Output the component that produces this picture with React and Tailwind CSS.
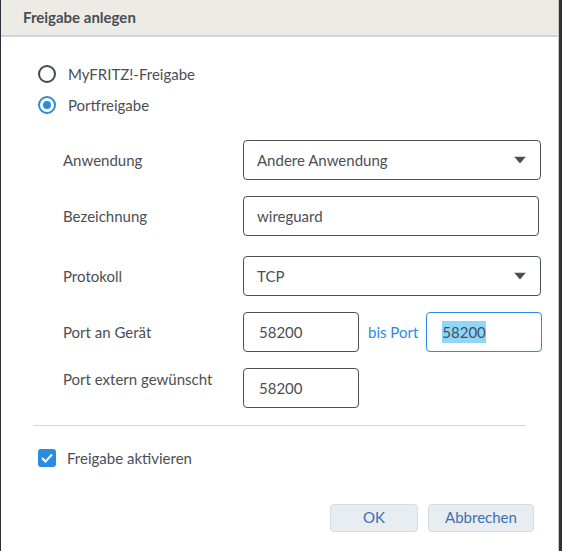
import { useState } from "react";

const font = { fontFamily: "Lato, 'Noto Sans', sans-serif" };

const Radio = ({ checked, label, onClick }) => (
  <button type="button" onClick={onClick} className="flex items-center gap-[12px] h-[20px]">
    {checked ? (
      <span className="w-[18px] h-[18px] rounded-full border-2 border-[#2b8be0] flex items-center justify-center">
        <span className="w-[8px] h-[8px] rounded-full bg-[#2b8be0]" />
      </span>
    ) : (
      <span className="w-[18px] h-[18px] rounded-full border-2 border-[#444a52]" />
    )}
    <span className="text-[15px] text-[#4b4f54]">{label}</span>
  </button>
);

const Caret = () => (
  <svg width="12" height="7" viewBox="0 0 12 7" className="absolute right-[14px] top-1/2 -translate-y-1/2">
    <path d="M0 0h12L6 7z" fill="#4b4f54" />
  </svg>
);

const Row = ({ label, children, className = "" }) => (
  <div className={"flex " + className}>
    <div className="w-[180px] text-[15px] text-[#4b4f54]">{label}</div>
    {children}
  </div>
);

export default function App() {
  const [mode, setMode] = useState("port");
  const [active, setActive] = useState(true);

  return (
    <div style={font} className="w-[562px] h-[551px] bg-[#2a323c] flex">
      <div className="ml-[1px] w-[558px] h-full bg-white flex flex-col border-r border-[#c9c9c9]">
        <div className="h-[37px] bg-[#ecebe5] border-b-2 border-[#d3d3d1] px-[22px] flex items-center">
          <h1 className="text-[15px] font-bold text-[#4a4d52]">Freigabe anlegen</h1>
        </div>

        <div className="px-[37px] pt-[27px] flex flex-col gap-[11px]">
          <Radio checked={mode === "myfritz"} label="MyFRITZ!-Freigabe" onClick={() => setMode("myfritz")} />
          <Radio checked={mode === "port"} label="Portfreigabe" onClick={() => setMode("port")} />
        </div>

        <div className="pl-[62px] pt-[25px] flex flex-col">
          <Row label="Anwendung" className="items-center h-[40px]">
            <div className="relative w-[298px] h-[40px] border border-[#4b4f54] rounded-[4px] flex items-center px-[13px] text-[15px] text-[#4b4f54]">
              Andere Anwendung
              <Caret />
            </div>
          </Row>
          <Row label="Bezeichnung" className="items-center h-[40px] mt-[16px]">
            <input
              defaultValue="wireguard"
              className="w-[296px] h-[40px] border border-[#4b4f54] rounded-[4px] px-[13px] text-[15px] text-[#4b4f54] outline-none"
            />
          </Row>
          <Row label="Protokoll" className="items-center h-[40px] mt-[20px]">
            <div className="relative w-[298px] h-[40px] border border-[#4b4f54] rounded-[4px] flex items-center px-[13px] text-[15px] text-[#4b4f54]">
              TCP
              <Caret />
            </div>
          </Row>
          <Row label="Port an Gerät" className="items-center h-[40px] mt-[16px]">
            <input
              defaultValue="58200"
              className="w-[116px] h-[40px] border border-[#4b4f54] rounded-[4px] px-[15px] text-[15px] text-[#4b4f54] outline-none"
            />
            <span className="ml-[9px] text-[15px] text-[#2b8be0]">bis Port</span>
            <div className="ml-[8px] w-[116px] h-[40px] border border-[#2b8be0] rounded-[4px] px-[15px] flex items-center text-[15px] text-[#4b4f54]">
              <span className="bg-[#8fd6fb]">58200</span>
            </div>
          </Row>
          <Row label="Port extern gewünscht" className="items-start mt-[16px]">
            <input
              defaultValue="58200"
              className="w-[116px] h-[40px] border border-[#4b4f54] rounded-[4px] px-[15px] text-[15px] text-[#4b4f54] outline-none"
            />
          </Row>
        </div>

        <div className="mx-[32px] mt-[17px] border-t border-[#d6d6d6]" />

        <label className="ml-[37px] mt-[21px] flex items-center gap-[11px] cursor-pointer">
          <input type="checkbox" checked={active} onChange={() => setActive(!active)} className="sr-only" />
          <span className={"w-[18px] h-[18px] rounded-[3px] flex items-center justify-center " + (active ? "bg-[#2b8be0]" : "border-2 border-[#444a52]")}>
            {active && (
              <svg width="12" height="10" viewBox="0 0 12 10">
                <path d="M1 5l3.5 3.5L11 1.5" stroke="white" strokeWidth="2" fill="none" />
              </svg>
            )}
          </span>
          <span className="text-[15px] text-[#4b4f54]">Freigabe aktivieren</span>
        </label>

        <div className="mt-[34px] pr-[24px] flex justify-end gap-[10px]">
          <button className="w-[88px] h-[28px] bg-[#e8edf2] border border-[#d4dce4] rounded-[4px] text-[15px] text-[#3d6fb3]">OK</button>
          <button className="w-[106px] h-[28px] bg-[#e8edf2] border border-[#d4dce4] rounded-[4px] text-[15px] text-[#3d6fb3]">Abbrechen</button>
        </div>
      </div>
    </div>
  );
}
